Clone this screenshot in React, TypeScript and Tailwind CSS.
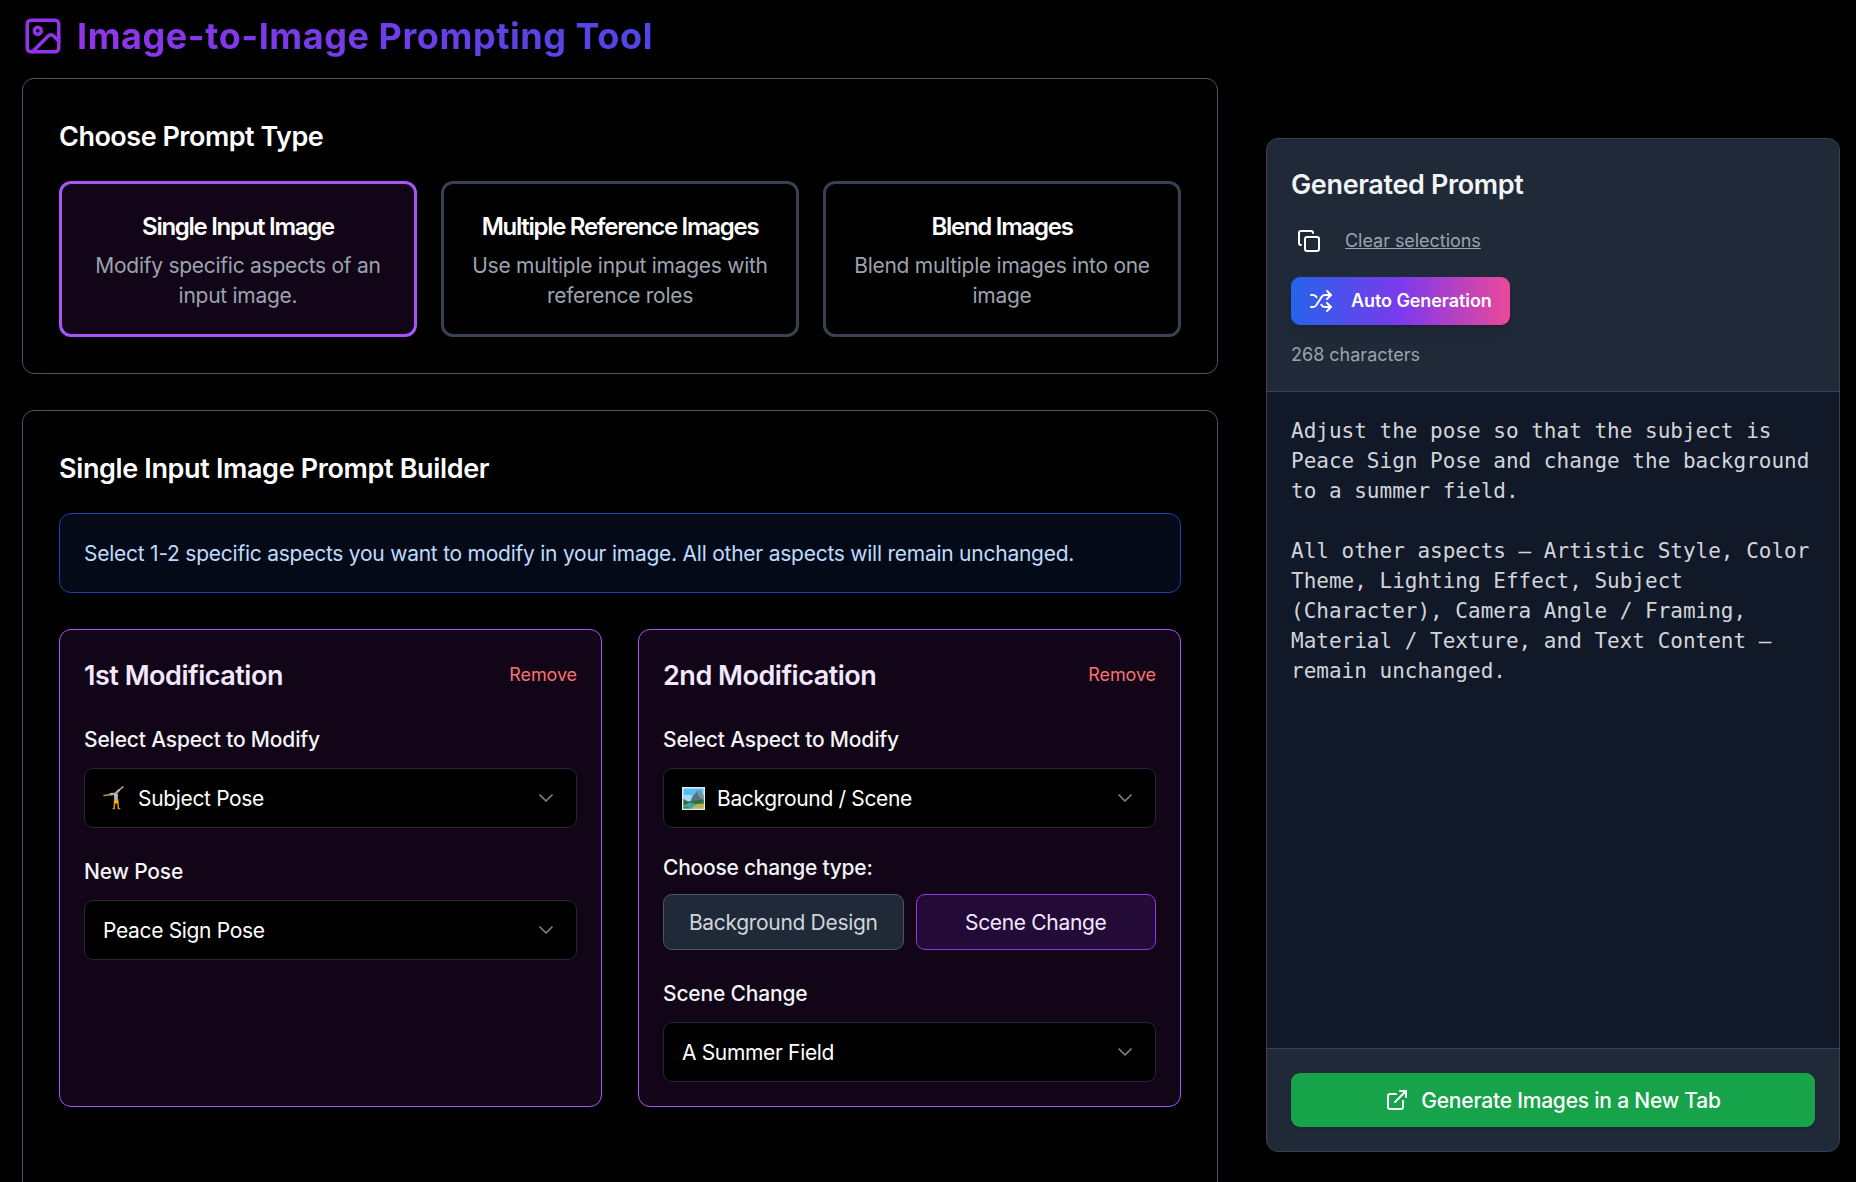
import { useState, type ReactNode } from "react";
import { ChevronDown, Copy, ExternalLink, Image, Shuffle } from "lucide-react";

const promptTypes = [
    { id: "single", title: "Single Input Image", text: "Modify specific aspects of an input image." },
    { id: "multiple", title: "Multiple Reference Images", text: "Use multiple input images with reference roles" },
    { id: "blend", title: "Blend Images", text: "Blend multiple images into one image" },
];

const prompt = `Adjust the pose so that the subject is Peace Sign Pose and change the background to a summer field.

All other aspects — Artistic Style, Color Theme, Lighting Effect, Subject (Character), Camera Angle / Framing, Material / Texture, and Text Content — remain unchanged.`;

const PoseIcon = () => (
    <svg width="22" height="24" viewBox="0 0 22 24" fill="none" strokeLinecap="round" strokeLinejoin="round">
        <path d="M1 9.5 8 8.4" stroke="#c8922e" strokeWidth="1.5" />
        <path d="M15.5 4.5 20 .9" stroke="#d9a23a" strokeWidth="1.5" />
        <path d="M7.5 8.3 12.5 7.6 16 4.2" stroke="#a9abb3" strokeWidth="2.4" />
        <path d="M10.8 8h4.2l-.3 6h-3.4z" fill="#b4b7c2" />
        <path d="M11.6 13.5 11.2 22.4M14.6 13.5 15.4 22.4" stroke="#d9951c" strokeWidth="1.5" />
        <circle cx="13.2" cy="15.8" r="2" fill="#f5b21f" />
        <path d="M10 22.7h1.6M15.3 22.7h1.6" stroke="#c98a22" strokeWidth="1.2" />
    </svg>
);

const SceneIcon = () => (
    <svg width="23" height="23" viewBox="0 0 23 23">
        <rect width="23" height="23" fill="#e8ecec" />
        <rect x="1.5" y="1.5" width="20" height="20" fill="#4fc0f0" />
        <path d="M1.5 8h20v9h-20z" fill="#a5def2" />
        <path d="M8 16 10.5 9 13 7l1.5-2.5L18 3.5l3.5 5V17z" fill="#557384" />
        <path d="M14.5 5 18 3.5l3.5 5V12l-3-1z" fill="#7d94a0" />
        <path d="M1.5 12 6 14.5l7-1 8.5-1v6h-20z" fill="#2f6e45" />
        <path d="M1.5 18.5 8 15.5l7 2-4 4H1.5z" fill="#4aa2a0" />
        <path d="M9 21.5 15 17l6.5-.5v5z" fill="#c4b04c" />
        <path d="M1.5 19.5 6 20l2 1.5H1.5z" fill="#43853c" />
    </svg>
);

const Label = ({ children }: { children: ReactNode }) => (
    <label className="block mt-[29px] mb-[13px] h-[30px] text-[21px] leading-[30px] font-medium tracking-[-0.18px] text-gray-100 whitespace-nowrap">
        {children}
    </label>
);

const SelectBox = ({ icon, value }: { icon?: ReactNode; value: string }) => (
    <button className="flex items-center w-full h-[60px] px-[18px] rounded-[9px] border border-gray-800 bg-black text-[21px] leading-[30px] tracking-[-0.34px] text-white whitespace-nowrap">
        {icon && <span className="w-[35px] shrink-0">{icon}</span>}
        <span className="translate-y-px">{value}</span>
        <ChevronDown className="ml-auto size-6 opacity-50" strokeWidth={1.7} />
    </button>
);

const ModificationCard = ({ title, children }: { title: string; children: ReactNode }) => (
    <div className="h-[478px] p-6 rounded-xl border border-[#a855f7] bg-[#110517]">
        <div className="flex justify-between items-center h-[42px]">
            <h3 className="translate-y-px text-[27px] font-semibold tracking-[-0.48px] text-[#f3e8ff] whitespace-nowrap">{title}</h3>
            <button className="-translate-y-px text-[18px] tracking-[-0.1px] text-[#f87171]">Remove</button>
        </div>
        {children}
    </div>
);

const App = () => {
    const [type, setType] = useState("single");
    const [change, setChange] = useState("scene");

    return (
        <div className="flex h-[1182px] w-full overflow-hidden bg-black pl-[22px] pr-4 font-['Inter',sans-serif] text-white">
            <main className="w-[1196px] shrink-0">
                <div className="flex items-center gap-[13px] h-[72px] mb-[6px]">
                    <Image className="size-[42px] text-[#9333ea]" />
                    <h1 className="text-[36px] leading-[54px] font-bold tracking-[0.56px] whitespace-nowrap bg-[linear-gradient(90deg,#9333ea,#4f46e5)] bg-clip-text text-transparent">
                        Image-to-Image Prompting Tool
                    </h1>
                </div>

                <section className="p-9 rounded-xl border border-[#4b5563] mb-9">
                    <h2 className="translate-y-px text-[27px] leading-[42px] font-semibold tracking-[-0.5px] mb-6">Choose Prompt Type</h2>
                    <div className="grid grid-cols-3 gap-6">
                        {promptTypes.map((item) => (
                            <button
                                key={item.id}
                                onClick={() => setType(item.id)}
                                className={
                                    type === item.id
                                        ? "h-[156px] px-6 pt-[25px] pb-[23px] rounded-xl border-3 border-[#a855f7] bg-[#110517]"
                                        : "h-[156px] px-6 pt-[25px] pb-[23px] rounded-xl border-3 border-[#374151]"
                                }>
                                <h3 className="text-[24px] leading-[36px] font-semibold tracking-[-1.28px] mb-1.5 whitespace-nowrap">{item.title}</h3>
                                <p className="text-[21px] leading-[30px] tracking-[-0.27px] text-[#9ca3af]">{item.text}</p>
                            </button>
                        ))}
                    </div>
                </section>

                <section className="h-[900px] p-9 rounded-xl border border-[#4b5563]">
                    <h2 className="translate-y-px text-[27px] leading-[42px] font-semibold tracking-[-0.36px] mb-6">Single Input Image Prompt Builder</h2>
                    <div className="px-6 pt-[25px] pb-[23px] mb-9 rounded-xl border border-[#1e40af] bg-[#040a18]">
                        <p className="text-[21px] leading-[30px] tracking-[-0.244px] text-[#bfdbfe] whitespace-nowrap">
                            Select 1-2 specific aspects you want to modify in your image. All other aspects will remain unchanged.
                        </p>
                    </div>

                    <div className="grid grid-cols-2 gap-9">
                        <ModificationCard title="1st Modification">
                            <Label>Select Aspect to Modify</Label>
                            <SelectBox icon={<PoseIcon />} value="Subject Pose" />
                            <Label>New Pose</Label>
                            <SelectBox value="Peace Sign Pose" />
                        </ModificationCard>

                        <ModificationCard title="2nd Modification">
                            <Label>Select Aspect to Modify</Label>
                            <SelectBox icon={<SceneIcon />} value="Background / Scene" />
                            <p className="mt-[25px] mb-[11px] text-[21px] leading-[30px] font-medium tracking-[-0.25px] text-gray-100">Choose change type:</p>
                            <div className="grid grid-cols-2 gap-3">
                                {["background", "scene"].map((id) => (
                                    <button
                                        key={id}
                                        onClick={() => setChange(id)}
                                        className={
                                            change === id
                                                ? "h-14 pt-0.5 rounded-[9px] border border-[#9333ea] bg-[#240a37] text-[21px] tracking-[-0.32px] text-[#f3e8ff]"
                                                : "h-14 pt-0.5 rounded-[9px] border border-[#4b5563] bg-[#1f2937] text-[21px] tracking-[-0.32px] text-[#d1d5db]"
                                        }>
                                        {id === "scene" ? "Scene Change" : "Background Design"}
                                    </button>
                                ))}
                            </div>
                            <Label>Scene Change</Label>
                            <SelectBox value="A Summer Field" />
                        </ModificationCard>
                    </div>
                </section>
            </main>

            <aside className="flex flex-col w-[574px] h-[1014px] mt-[138px] ml-auto shrink-0 rounded-xl border border-[#374151] bg-[#1f2937] overflow-hidden">
                <div className="p-6 border-b border-[#374151]">
                    <h2 className="translate-y-px text-[27px] leading-[42px] font-semibold tracking-[-0.36px] text-[#f3f4f6]">Generated Prompt</h2>
                    <div className="flex items-center gap-[18px] mt-[18px]">
                        <button className="p-1.5">
                            <Copy className="size-6" />
                        </button>
                        <button className="text-[18px] leading-6 tracking-[-0.04px] text-[#9ca3af] underline">Clear selections</button>
                    </div>
                    <button className="flex items-center gap-[18px] h-12 w-[219px] mt-[18px] px-[18px] rounded-[9px] bg-[linear-gradient(90deg,#2563eb,#7c3aed_50%,#ec4899)] text-[18px] font-semibold tracking-[-0.08px] whitespace-nowrap shadow-lg">
                        <Shuffle className="size-6 shrink-0" />
                        <span className="-translate-y-px">Auto Generation</span>
                    </button>
                    <p className="mt-[18px] text-[18px] leading-6 text-[#9ca3af]">268 characters</p>
                </div>

                <pre className="flex-1 p-6 bg-[#111827] font-['DejaVu_Sans_Mono',monospace] text-[21px] leading-[30px] text-[#d1d5db] whitespace-pre-wrap">
                    {prompt}
                </pre>

                <div className="p-6 border-t border-[#374151]">
                    <button className="flex justify-center items-center gap-3 w-full h-[54px] rounded-[9px] bg-[#16a34a] text-[21px] font-medium tracking-[-0.21px] shadow-sm">
                        <ExternalLink className="size-6" />
                        <span className="translate-y-px">Generate Images in a New Tab</span>
                    </button>
                </div>
            </aside>
        </div>
    );
};

export default App;
